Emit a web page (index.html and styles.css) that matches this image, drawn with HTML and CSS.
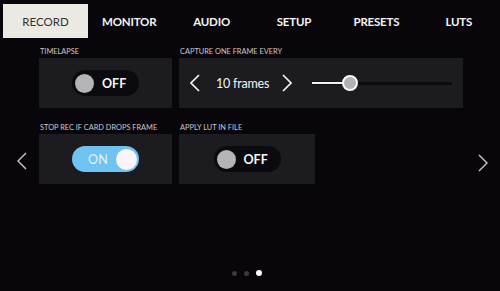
FILE: index.html
```html
<!DOCTYPE html>
<html lang="en">
<head>
<meta charset="utf-8">
<title>Record settings</title>
<link rel="stylesheet" href="styles.css">
</head>
<body>
<div class="screen">
  <nav class="tabs">
    <div class="tab active">RECORD</div>
    <div class="tab">MONITOR</div>
    <div class="tab">AUDIO</div>
    <div class="tab">SETUP</div>
    <div class="tab">PRESETS</div>
    <div class="tab">LUTS</div>
  </nav>
  <main class="content">
    <div class="pager prev">
      <svg width="10" height="18" viewBox="0 0 10 18"><polyline points="9,1 1,9 9,17" fill="none" stroke="#c9c9cc" stroke-width="1.4"/></svg>
    </div>
    <div class="grid">
      <section class="field">
        <div class="label">TIMELAPSE</div>
        <div class="card center">
          <div class="toggle off"><span class="knob"></span><span class="state">OFF</span></div>
        </div>
      </section>
      <section class="field span2">
        <div class="label">CAPTURE ONE FRAME EVERY</div>
        <div class="card stepper">
          <svg class="chev" width="10" height="18" viewBox="0 0 10 18"><polyline points="9,1 1,9 9,17" fill="none" stroke="#f2f2f2" stroke-width="1.7"/></svg>
          <span class="value">10 frames</span>
          <svg class="chev" width="10" height="18" viewBox="0 0 10 18"><polyline points="1,1 9,9 1,17" fill="none" stroke="#f2f2f2" stroke-width="1.7"/></svg>
          <div class="slider">
            <div class="fill" style="width:27%"></div>
            <div class="thumb" style="left:27%"></div>
          </div>
        </div>
      </section>
      <section class="field">
        <div class="label">STOP REC IF CARD DROPS FRAME</div>
        <div class="card center">
          <div class="toggle on"><span class="state">ON</span><span class="knob"></span></div>
        </div>
      </section>
      <section class="field">
        <div class="label">APPLY LUT IN FILE</div>
        <div class="card center">
          <div class="toggle off"><span class="knob"></span><span class="state">OFF</span></div>
        </div>
      </section>
    </div>
    <div class="pager next">
      <svg width="10" height="18" viewBox="0 0 10 18"><polyline points="1,1 9,9 1,17" fill="none" stroke="#c9c9cc" stroke-width="1.4"/></svg>
    </div>
  </main>
  <div class="dots">
    <span class="dot"></span><span class="dot"></span><span class="dot active"></span>
  </div>
</div>
</body>
</html>
```

FILE: styles.css
```css
* { box-sizing: border-box; }
html, body {
  margin: 0;
  padding: 0;
  background: #09060b;
}
body {
  font-family: Lato, "Open Sans", sans-serif;
  color: #fff;
}
.screen {
  width: 500px;
  height: 291px;
  display: flex;
  flex-direction: column;
  overflow: hidden;
}
.tabs {
  display: grid;
  grid-template-columns: repeat(6, 1fr);
  padding: 4px 0 0 3px;
  height: 38px;
}
.tab {
  display: flex;
  align-items: center;
  justify-content: center;
  font-size: 11.5px;
  font-weight: 700;
  color: #f4f4f4;
  padding-top: 1px;
  letter-spacing: -0.2px;
}
.tab.active {
  background: #ebe9e2;
  color: #333235;
  font-weight: 400;
  width: 85px;
  letter-spacing: 0;
}
.content {
  flex: 1;
  display: flex;
  align-items: flex-start;
  padding-top: 9px;
}
.pager {
  width: 39px;
  display: flex;
  justify-content: center;
  padding-left: 4px;
  margin-top: 105px;
}
.pager.next {
  width: 37px;
  padding-left: 3px;
  margin-top: 107px;
}
.grid {
  display: grid;
  grid-template-columns: 133px 136px 141px;
  column-gap: 7px;
  row-gap: 15px;
}
.field { display: flex; flex-direction: column; }
.span2 { grid-column: span 2; }
.label {
  font-size: 7.4px;
  line-height: 10px;
  color: #c9c8cc;
  margin-bottom: 1px;
  padding-left: 1px;
  white-space: nowrap;
}
.card {
  height: 50px;
  background: #1c1b20;
}
.card.center {
  display: flex;
  align-items: center;
  justify-content: center;
}
.toggle {
  width: 67px;
  height: 26px;
  border-radius: 13px;
  display: flex;
  align-items: center;
}
.toggle.off {
  background: #0b0a0e;
  padding: 0 3px;
  gap: 8px;
}
.toggle.off .knob {
  width: 19px;
  height: 19px;
  border-radius: 50%;
  background: #b4b4b8;
}
.toggle.off .state {
  font-size: 12.5px;
  font-weight: 700;
  color: #f6f6f6;
}
.toggle.on {
  background: #6fc3f0;
  padding: 0 2px 0 16px;
  justify-content: space-between;
}
.toggle.on .state {
  font-size: 12.5px;
  font-weight: 400;
  color: #e6f3fb;
  letter-spacing: 0.3px;
}
.toggle.on .knob {
  width: 21px;
  height: 21px;
  border-radius: 50%;
  background: #fdf4f9;
}
.stepper {
  display: flex;
  align-items: center;
  padding: 0 11px;
}
.value {
  font-size: 12.5px;
  color: #f4f4f4;
  margin: 0 17px 0 16px;
  width: 49px;
  white-space: nowrap;
  letter-spacing: -0.2px;
}
.slider {
  position: relative;
  flex: 1;
  height: 3px;
  background: #0d0b0f;
  margin-left: 20px;
}
.slider .fill {
  height: 2px;
  background: #f2f2f2;
}
.slider .thumb {
  position: absolute;
  top: 50%;
  width: 16px;
  height: 16px;
  margin: -8px 0 0 -8px;
  border-radius: 50%;
  background: #b2b1b5;
  border: 2px solid #fafafa;
}
.dots {
  display: flex;
  justify-content: center;
  align-items: center;
  gap: 7px;
  height: 10px;
  margin-bottom: 13px;
  padding-right: 7px;
}
.dot {
  width: 5px;
  height: 5px;
  border-radius: 50%;
  background: #3a393e;
}
.dot.active {
  width: 6px;
  height: 6px;
  background: #fff;
}
```
